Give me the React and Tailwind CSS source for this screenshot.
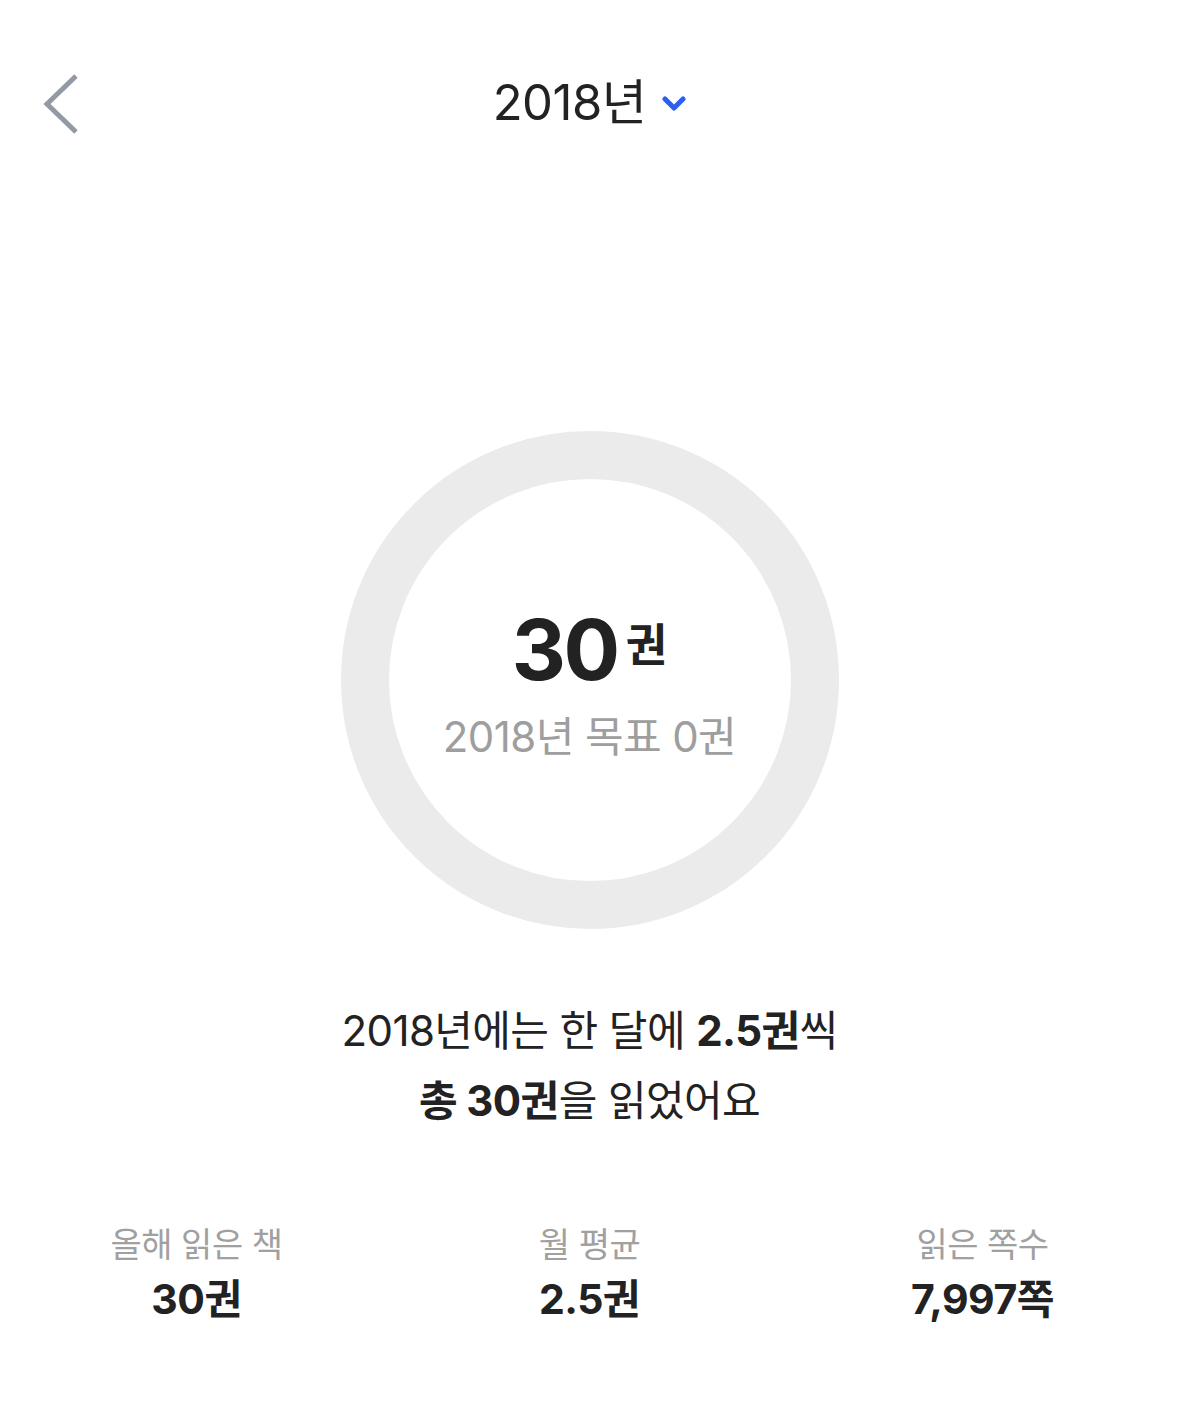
import { useMemo } from 'react'

const stats = [
  { label: '올해 읽은 책', value: '30권' },
  { label: '월 평균', value: '2.5권' },
  { label: '읽은 쪽수', value: '7,997쪽' },
]

const fontStack = { fontFamily: '"Inter", "Noto Sans CJK KR", sans-serif' }

function BackIcon() {
  return (
    <svg width="40" height="64" viewBox="0 0 40 64" fill="none">
      <polyline points="35,4 6,32 35,60" stroke="#9499a6" strokeWidth="5" strokeLinecap="butt" strokeLinejoin="miter" />
    </svg>
  )
}

function ChevronDown() {
  return (
    <svg width="24" height="16" viewBox="0 0 24 16" fill="none">
      <polyline points="3,3 12,12 21,3" stroke="#2c5ef0" strokeWidth="5" strokeLinecap="round" strokeLinejoin="round" />
    </svg>
  )
}

export default function App() {
  const year = useMemo(() => 2018, [])

  return (
    <main className="min-h-screen w-full bg-white text-[#222]" style={fontStack}>
      <header className="relative flex h-[206px] items-start justify-center pt-[72px]">
        <button type="button" className="absolute left-[41px] top-[72px]">
          <BackIcon />
        </button>
        <div className="flex items-center gap-[16px]">
          <h1 className="text-[49px] leading-[62px] font-normal tracking-[-0.5px] text-[#222]">{year}년</h1>
          <span className="mt-[2px]">
            <ChevronDown />
          </span>
        </div>
      </header>

      <section className="mt-[225px] flex justify-center">
        <div className="flex h-[498px] w-[498px] flex-col items-center justify-center rounded-full border-[48px] border-[#ebebeb] pt-[10px]">
          <div className="flex items-start">
            <span className="text-[84px] leading-[90px] font-bold tracking-[-2.5px] text-[#222]">30</span>
            <span className="ml-[8px] mt-[17px] text-[45px] leading-[48px] font-bold text-[#222]">권</span>
          </div>
          <p className="mt-[14px] text-[42px] leading-[56px] tracking-[-0.6px] text-[#9e9e9e]">{year}년 목표 0권</p>
        </div>
      </section>

      <section className="mt-[67px] flex flex-col items-center text-[42px] leading-[70px] tracking-[-0.6px] text-[#222]">
        <p>
          {year}년에는 한 달에 <span className="font-bold">2.5권</span>씩
        </p>
        <p>
          <span className="font-bold">총 30권</span>을 읽었어요
        </p>
      </section>

      <section className="mt-[86px] grid grid-cols-3">
        {stats.map((stat) => (
          <div key={stat.label} className="flex flex-col items-center">
            <p className="text-[34px] leading-[46px] tracking-[-0.5px] text-[#a0a0a0]">{stat.label}</p>
            <p className="mt-[6px] text-[41px] leading-[50px] font-bold tracking-[-0.5px] text-[#222]">{stat.value}</p>
          </div>
        ))}
      </section>
    </main>
  )
}
